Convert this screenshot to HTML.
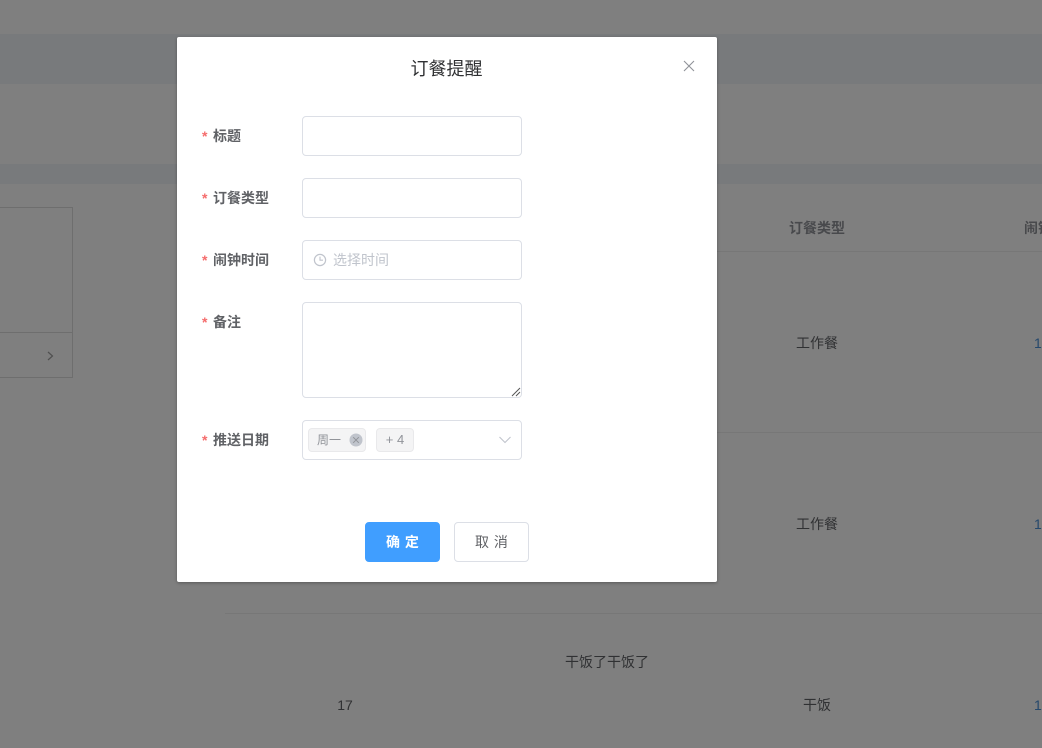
<!DOCTYPE html>
<html lang="zh">
<head>
<meta charset="utf-8">
<style>
*{box-sizing:border-box}
html,body{margin:0;padding:0;width:1042px;height:748px;overflow:hidden;background:#7f7f7f;font-family:"Liberation Sans","Noto Sans CJK SC",sans-serif}
.a{position:absolute;white-space:nowrap}
.c{transform:translateX(-50%)}
.band{position:absolute;left:0;width:1042px;background:#787a7c}
.line{position:absolute;background:#777777;height:1px}
.th{font-size:14px;font-weight:700;color:#48494c;line-height:20px}
.td{font-size:14px;color:#303133;line-height:20px}
.num{font-size:14px;color:#25486c;line-height:20px}
#dlg{position:absolute;left:177px;top:37px;width:540px;height:545px;background:#fff;border-radius:2px;box-shadow:0 1px 3px rgba(0,0,0,.3)}
.lab{position:absolute;left:25px;font-size:14px;font-weight:700;color:#606266;line-height:20px;white-space:nowrap}
.lab i{font-style:normal;font-weight:700;color:#f56c6c;margin-right:5.5px}
.inp{position:absolute;left:125px;width:220px;height:40px;border:1px solid #dcdfe6;border-radius:4px;background:#fff}
.btn{position:absolute;top:485px;width:75px;height:40px;border-radius:4px;font-size:14px;line-height:38px;text-align:center;word-spacing:1px}
.tag{position:absolute;top:7px;height:24px;background:#f4f4f5;border:1px solid #e9e9eb;border-radius:4px;font-size:12px;color:#909399;line-height:22px}
</style>
</head>
<body>
<div class="band" style="top:34px;height:50px"></div>
<div class="band" style="top:164px;height:20px"></div>

<div class="a" style="left:-2px;top:207px;width:75px;height:171px;border:1px solid #6e6e6e"></div>
<div class="line" style="left:0;top:332px;width:73px;background:#6e6e6e"></div>
<svg class="a" style="left:46px;top:350px" width="10" height="12" viewBox="0 0 10 12"><path d="M2 2 L6.5 6 L2 10" fill="none" stroke="#505050" stroke-width="1.2"/></svg>

<div class="line" style="left:225px;top:251px;width:817px"></div>
<div class="line" style="left:225px;top:432px;width:817px"></div>
<div class="line" style="left:225px;top:613px;width:817px"></div>

<div class="a c th" style="left:817px;top:218px">订餐类型</div>
<div class="a th" style="left:1024px;top:218px">闹钟时间</div>
<div class="a c td" style="left:817px;top:333px">工作餐</div>
<div class="a num" style="left:1034px;top:333px">1</div>
<div class="a c td" style="left:817px;top:514px">工作餐</div>
<div class="a num" style="left:1034px;top:514px">1</div>
<div class="a c td" style="left:607px;top:652px">干饭了干饭了</div>
<div class="a c td" style="left:345px;top:695px">17</div>
<div class="a c td" style="left:817px;top:695px">干饭</div>
<div class="a num" style="left:1034px;top:695px">1</div>

<div id="dlg">
  <div class="a c" style="left:270px;top:20px;font-size:18px;line-height:24px;color:#303133;margin-left:-0.5px">订餐提醒</div>
  <svg class="a" style="left:506px;top:23px" width="12" height="12" viewBox="0 0 12 12"><path d="M1 1 L11 11 M11 1 L1 11" stroke="#909399" stroke-width="1.1" fill="none"/></svg>

  <div class="lab" style="top:89px"><i>*</i>标题</div>
  <div class="inp" style="top:79px"></div>

  <div class="lab" style="top:151px"><i>*</i>订餐类型</div>
  <div class="inp" style="top:141px"></div>

  <div class="lab" style="top:213px"><i>*</i>闹钟时间</div>
  <div class="inp" style="top:203px">
    <svg class="a" style="left:10px;top:12px" width="14" height="14" viewBox="0 0 14 14"><circle cx="7" cy="7" r="5.6" fill="none" stroke="#c0c4cc" stroke-width="1.2"/><path d="M7 3.6 V7.2 H10" fill="none" stroke="#c0c4cc" stroke-width="1.1"/></svg>
    <div class="a" style="left:30px;top:9px;font-size:14px;line-height:20px;color:#c0c4cc">选择时间</div>
  </div>

  <div class="lab" style="top:275px"><i>*</i>备注</div>
  <div class="inp" style="top:265px;height:96px">
    <svg class="a" style="right:0;bottom:0" width="10" height="10" viewBox="0 0 10 10"><path d="M1 9 L9 1 M5 9 L9 5" stroke="#555" stroke-width="1" fill="none"/></svg>
  </div>

  <div class="lab" style="top:393px"><i>*</i>推送日期</div>
  <div class="inp" style="top:383px">
    <div class="tag" style="left:5px;width:58px;padding-left:8px">周一
      <svg class="a" style="left:40px;top:4px" width="14" height="14" viewBox="0 0 14 14"><circle cx="7" cy="7" r="6.5" fill="#c0c4cc"/><path d="M4.2 4.2 L9.8 9.8 M9.8 4.2 L4.2 9.8" stroke="#909399" stroke-width="1"/></svg>
    </div>
    <div class="tag" style="left:73px;width:38px;text-align:center;font-size:13px">+ 4</div>
    <svg class="a" style="left:195px;top:14px" width="14" height="10" viewBox="0 0 14 10"><path d="M1.5 2 L7 7.5 L12.5 2" fill="none" stroke="#c0c4cc" stroke-width="1.1"/></svg>
  </div>

  <div class="btn" style="left:188px;background:#409eff;color:#fff;border:1px solid #409eff;font-weight:700">确 定</div>
  <div class="btn" style="left:277px;background:#fff;color:#606266;border:1px solid #dcdfe6">取 消</div>
</div>
</body>
</html>
